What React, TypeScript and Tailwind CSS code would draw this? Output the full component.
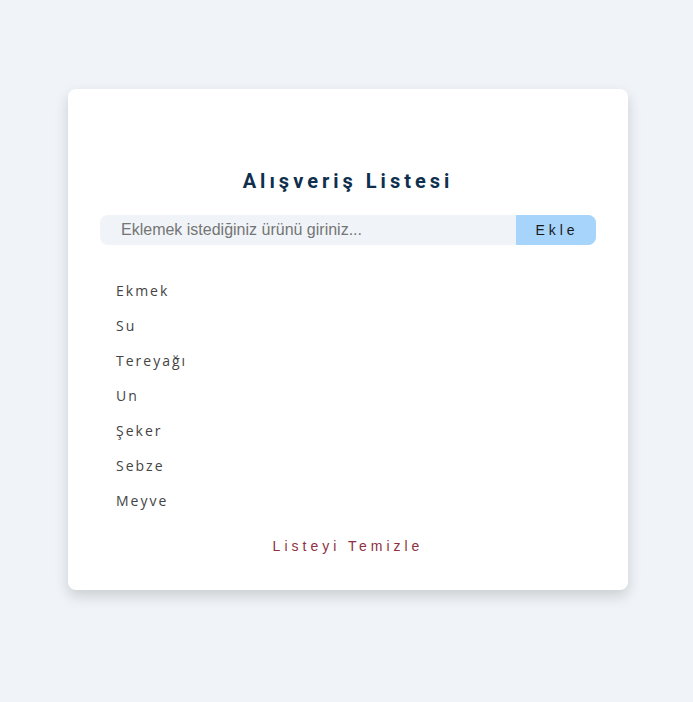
import React from 'react';

const items = ['Ekmek', 'Su', 'Tereyağı', 'Un', 'Şeker', 'Sebze', 'Meyve'];

export default function App() {
	return (
		<div className="min-h-screen w-full bg-[#f0f4f8] pt-[89px]">
			<div className="ml-[68px] w-[560px] rounded-lg bg-white px-8 pt-[78px] pb-[33px] shadow-[0_6px_14px_rgba(0,0,0,0.16)]">
				<h1 className="text-center font-['Roboto',sans-serif] text-[20px] font-bold leading-[28px] tracking-[4px] text-[#0f2f4e]">
					Alışveriş Listesi
				</h1>

				<div className="mt-[20px] flex h-[30px] overflow-hidden rounded-lg bg-[#f0f4f8]">
					<input
						type="text"
						placeholder="Eklemek istediğiniz ürünü giriniz..."
						className="h-full flex-1 bg-transparent pl-[21px] font-['Liberation_Sans',Arial,sans-serif] text-[16px] text-[#333] outline-none placeholder:text-[#757575]"
					/>
					<button className="h-full w-[80px] bg-[#a6d4fa] pl-[2px] font-['Liberation_Sans',Arial,sans-serif] text-[14px] tracking-[4px] text-[#1a1a1a]">
						Ekle
					</button>
				</div>

				<ul className="mt-[28px] pl-4">
					{items.map((item) => (
						<li
							key={item}
							className="font-['Open_Sans',sans-serif] text-[14px] leading-[35px] tracking-[2px] text-[#444]"
						>
							{item}
						</li>
					))}
				</ul>

				<div className="mt-[15px] text-center">
					<button className="font-['Liberation_Sans',Arial,sans-serif] text-[14px] leading-[20px] tracking-[4px] text-[#8e3040]">
						Listeyi Temizle
					</button>
				</div>
			</div>
		</div>
	);
}
